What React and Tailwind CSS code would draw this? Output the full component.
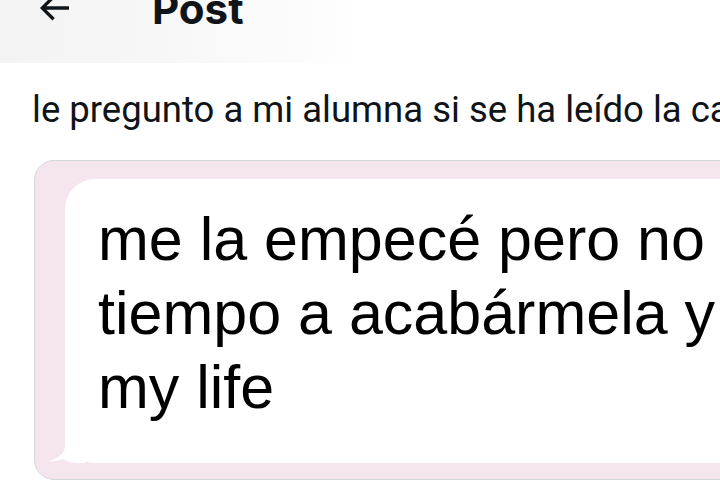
import React from "react";

export default function App() {
  return (
    <div className="w-[720px] h-[480px] overflow-hidden bg-white">
      <div className="h-[63px] w-[370px] bg-gradient-to-r from-[#f3f3f3] via-[#f8f8f8] to-white flex items-start">
        <div className="flex items-start -mt-[12px]">
          <svg viewBox="0 0 24 24" className="w-[40px] h-[40px] ml-[34px] fill-[#0f1419]">
            <path d="M7.414 13l5.043 5.04-1.414 1.42L3.586 12l7.457-7.46 1.414 1.42L7.414 11H21v2H7.414z" />
          </svg>
          <div className="ml-[78px] text-[42px] leading-[42px] font-bold text-[#0f1419] [font-family:Inter,sans-serif]">
            Post
          </div>
        </div>
      </div>
      <div className="mt-[26px] pl-[32px] whitespace-nowrap text-[36.5px] leading-[42px] text-[#0f1419] [font-family:Roboto,sans-serif]">
        le pregunto a mi alumna si se ha leído la carta
      </div>
      <div className="mt-[29px] ml-[34px] w-[720px] h-[320px] border border-[#cfd9de] rounded-[20px] bg-[#f4e5ee] overflow-hidden pt-[18px] pl-[30px] pb-[16px]">
        <div className="relative h-full bg-white rounded-l-[30px] pt-[23px] pl-[33px]">
          <svg viewBox="0 0 40 30" className="absolute -left-[20px] bottom-0 w-[40px] h-[30px]">
            <path d="M20 0 L20 12 Q20 24 3 28 Q12 29 18 26 Q26 31 40 30 L40 0 Z" fill="#ffffff" />
          </svg>
          <div className="relative text-[61px] leading-[74px] text-black [font-family:'Liberation_Sans',Arial,sans-serif] whitespace-nowrap">
            <div>me la empecé pero no</div>
            <div>tiempo a acabármela y</div>
            <div>my life</div>
          </div>
        </div>
      </div>
    </div>
  );
}
